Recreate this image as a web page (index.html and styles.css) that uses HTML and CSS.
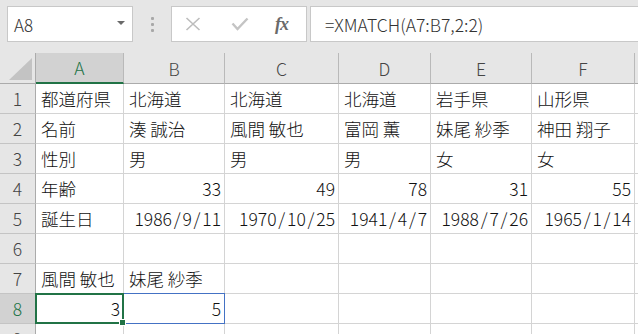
FILE: index.html
```html
<!DOCTYPE html>
<html lang="ja">
<head>
<meta charset="utf-8">
<link rel="stylesheet" href="styles.css">
</head>
<body>
<div class="app">
  <div class="toolbar">
    <div class="namebox">
      <span class="nb-text">A8</span>
      <svg class="nb-arrow" width="8" height="4" viewBox="0 0 8 4"><path d="M0 0 L8 0 L4 4 Z" fill="#6a6a6a"/></svg>
    </div>
    <div class="grip"><i></i><i></i><i></i></div>
    <div class="fxbox">
      <svg class="ic-x" width="16" height="14" viewBox="0 0 16 14"><path d="M1.5 1 L14.5 13 M14.5 1 L1.5 13" stroke="#bdbdbd" stroke-width="1.6" fill="none"/></svg>
      <svg class="ic-check" width="18" height="14" viewBox="0 0 18 14"><path d="M1.5 6.5 L6.5 12 L16.5 1.5" stroke="#c4c4c4" stroke-width="2.4" fill="none"/></svg>
      <span class="ic-fx">fx</span>
    </div>
    <div class="formula">=XMATCH(A7:B7,2:2)</div>
  </div>
  <div class="sheet">
    <div class="hd corner"><svg width="24" height="23" viewBox="0 0 24 23"><path d="M23 0 L23 22 L0 22 Z" fill="#c3c3c3"/></svg></div>
    <div class="hd ch sel">A</div>
    <div class="hd ch">B</div>
    <div class="hd ch">C</div>
    <div class="hd ch">D</div>
    <div class="hd ch">E</div>
    <div class="hd ch">F</div>
    <div class="hd ch"></div>

    <div class="hd rh">1</div>
    <div class="c">都道府県</div><div class="c">北海道</div><div class="c">北海道</div><div class="c">北海道</div><div class="c">岩手県</div><div class="c">山形県</div><div class="c"></div>

    <div class="hd rh">2</div>
    <div class="c">名前</div><div class="c">湊 誠治</div><div class="c">風間 敏也</div><div class="c">富岡 薫</div><div class="c">妹尾 紗季</div><div class="c">神田 翔子</div><div class="c"></div>

    <div class="hd rh">3</div>
    <div class="c">性別</div><div class="c">男</div><div class="c">男</div><div class="c">男</div><div class="c">女</div><div class="c">女</div><div class="c"></div>

    <div class="hd rh">4</div>
    <div class="c">年齢</div><div class="c n">33</div><div class="c n">49</div><div class="c n">78</div><div class="c n">31</div><div class="c n">55</div><div class="c"></div>

    <div class="hd rh">5</div>
    <div class="c">誕生日</div><div class="c n">1986<span class="sl">/</span>9<span class="sl">/</span>11</div><div class="c n">1970<span class="sl">/</span>10<span class="sl">/</span>25</div><div class="c n">1941<span class="sl">/</span>4<span class="sl">/</span>7</div><div class="c n">1988<span class="sl">/</span>7<span class="sl">/</span>26</div><div class="c n">1965<span class="sl">/</span>1<span class="sl">/</span>14</div><div class="c"></div>

    <div class="hd rh">6</div>
    <div class="c"></div><div class="c"></div><div class="c"></div><div class="c"></div><div class="c"></div><div class="c"></div><div class="c"></div>

    <div class="hd rh">7</div>
    <div class="c">風間 敏也</div><div class="c">妹尾 紗季</div><div class="c"></div><div class="c"></div><div class="c"></div><div class="c"></div><div class="c"></div>

    <div class="hd rh sel">8</div>
    <div class="c n active">3<span class="handle"></span></div><div class="c n ref">5</div><div class="c"></div><div class="c"></div><div class="c"></div><div class="c"></div><div class="c"></div>

    <div class="hd rh">9</div>
    <div class="c"></div><div class="c"></div><div class="c"></div><div class="c"></div><div class="c"></div><div class="c"></div><div class="c"></div>
  </div>
</div>
</body>
</html>
```

FILE: styles.css
```css
html, body {
  margin: 0;
  padding: 0;
}
body {
  width: 638px;
  height: 334px;
  overflow: hidden;
  background: #e6e6e6;
  font-family: "Noto Sans CJK JP", "Noto Sans", sans-serif;
}
.app {
  width: 638px;
}
.toolbar {
  height: 53px;
  box-sizing: border-box;
  padding-top: 6px;
  padding-left: 7px;
  display: flex;
  align-items: flex-start;
}
.namebox {
  width: 126px;
  height: 36px;
  box-sizing: border-box;
  background: #fff;
  border: 1px solid #c8c8c8;
  display: flex;
  align-items: center;
  padding-left: 6px;
  padding-right: 7px;
}
.nb-text {
  flex: 1;
  font-size: 17px;
  font-weight: 300;
  color: #333;
  line-height: 1;
  padding-top: 1px;
}
.nb-arrow {
  margin-top: -2px;
}
.grip {
  width: 38px;
  height: 36px;
  display: flex;
  flex-direction: column;
  align-items: center;
  justify-content: center;
  gap: 3px;
}
.grip i {
  width: 3px;
  height: 3px;
  background: #a8a8a8;
  border-radius: 1px;
}
.fxbox {
  width: 136px;
  height: 36px;
  box-sizing: border-box;
  background: #fff;
  border: 1px solid #c8c8c8;
  display: flex;
  align-items: center;
  padding-left: 13px;
}
.ic-x {
  margin-right: 30px;
}
.ic-check {
  margin-right: 26px;
}
.ic-fx {
  font-family: "Liberation Serif", "DejaVu Serif", serif;
  font-style: italic;
  font-weight: bold;
  font-size: 18px;
  color: #6a6a6a;
  letter-spacing: -1px;
}
.formula {
  flex: 1;
  margin-left: 3px;
  margin-right: -4px;
  height: 36px;
  box-sizing: border-box;
  background: #fff;
  border: 1px solid #c8c8c8;
  display: flex;
  align-items: center;
  padding-left: 14px;
  font-size: 17.5px;
  font-weight: 300;
  color: #333;
}
.sheet {
  display: grid;
  grid-template-columns: 36px 88px 101px 114px 92px 101px 103px 1fr;
  grid-template-rows: 31px repeat(9, 30px);
  background: #fff;
}
.c, .hd {
  box-sizing: border-box;
  border-right: 1px solid #d4d4d4;
  border-bottom: 1px solid #d4d4d4;
  display: flex;
  align-items: center;
  white-space: nowrap;
  font-size: 17.5px;
  font-weight: 300;
  line-height: 1;
  position: relative;
}
.c {
  background: #fff;
  color: #111;
  padding: 1px 3px 0 5px;
}
.c.n {
  justify-content: flex-end;
}
.sl {
  margin: 0 1.8px;
}
.hd {
  background: #e6e6e6;
  color: #444;
  justify-content: center;
  border-right-color: #b9b9b9;
  border-bottom-color: #c4c4c4;
}
.ch {
  border-bottom-color: #ababab;
  padding-top: 1px;
}
.corner {
  border-bottom-color: #ababab;
  border-right-color: #ababab;
  justify-content: flex-end;
  align-items: flex-end;
  padding: 0 2px 2px 0;
}
.rh {
  border-right-color: #ababab;
  padding-top: 1px;
}
.hd.sel {
  background: #d2d2d2;
  color: #217346;
}
.ch.sel {
  border-bottom: 2px solid #217346;
}
.active::after {
  content: "";
  position: absolute;
  left: -1px;
  top: -1px;
  right: -1px;
  bottom: -1px;
  border: 2px solid #217346;
  z-index: 2;
}
.handle {
  position: absolute;
  right: -3px;
  bottom: -3px;
  width: 5px;
  height: 5px;
  background: #217346;
  border: 1px solid #fff;
  z-index: 3;
}
.ref::after {
  content: "";
  position: absolute;
  left: -1px;
  top: -1px;
  right: -1px;
  bottom: -1px;
  border: 1px solid #4472c4;
  z-index: 1;
}
```
